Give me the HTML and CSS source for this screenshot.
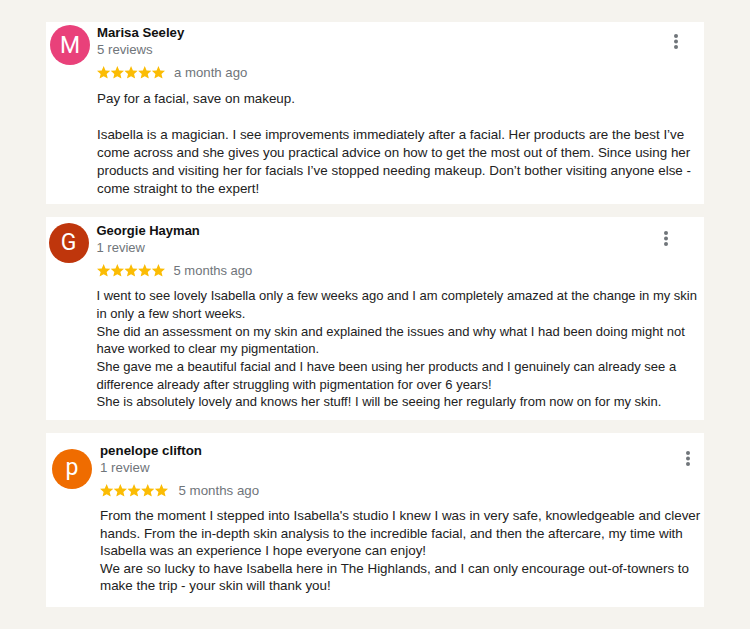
FILE: index.html
```html
<!DOCTYPE html>
<html lang="en">
<head>
<meta charset="utf-8">
<title>Reviews</title>
<link rel="stylesheet" href="styles.css">
</head>
<body>
<svg class="defs" width="0" height="0" aria-hidden="true">
  <defs>
    <symbol id="star" viewBox="2 2 20 19.3">
      <path d="M12 17.27L18.18 21l-1.64-7.03L22 9.24l-7.19-.61L12 2 9.19 8.63 2 9.24l5.46 4.73L5.82 21z"/>
    </symbol>
    <symbol id="dots" viewBox="0 0 4 15">
      <circle cx="2" cy="2" r="2"/>
      <circle cx="2" cy="7.5" r="2"/>
      <circle cx="2" cy="13" r="2"/>
    </symbol>
  </defs>
</svg>

<main class="reviews">
  <article class="card card-1">
    <div class="avatar avatar-pink">M</div>
    <div class="main">
      <div class="head">
        <div class="who">
          <div class="name">Marisa Seeley</div>
          <div class="count">5 reviews</div>
        </div>
        <svg class="more" width="4" height="15"><use href="#dots"/></svg>
      </div>
      <div class="rating">
        <svg class="stars" width="68" height="13" viewBox="0 0 68 13">
          <use href="#star" x="0" width="13.3" height="12.8"/>
          <use href="#star" x="13.7" width="13.3" height="12.8"/>
          <use href="#star" x="27.4" width="13.3" height="12.8"/>
          <use href="#star" x="41.1" width="13.3" height="12.8"/>
          <use href="#star" x="54.8" width="13.3" height="12.8"/>
        </svg>
        <span class="when">a month ago</span>
      </div>
      <p class="text">Pay for a facial, save on makeup.<br><br>Isabella is a magician. I see improvements immediately after a facial. Her products are the best I’ve<br>come across and she gives you practical advice on how to get the most out of them. Since using her<br>products and visiting her for facials I’ve stopped needing makeup. Don’t bother visiting anyone else -<br>come straight to the expert!</p>
    </div>
  </article>

  <article class="card card-2">
    <div class="avatar avatar-rust">G</div>
    <div class="main">
      <div class="head">
        <div class="who">
          <div class="name">Georgie Hayman</div>
          <div class="count">1 review</div>
        </div>
        <svg class="more" width="4" height="15"><use href="#dots"/></svg>
      </div>
      <div class="rating">
        <svg class="stars" width="68" height="13" viewBox="0 0 68 13">
          <use href="#star" x="0" width="13.3" height="12.8"/>
          <use href="#star" x="13.7" width="13.3" height="12.8"/>
          <use href="#star" x="27.4" width="13.3" height="12.8"/>
          <use href="#star" x="41.1" width="13.3" height="12.8"/>
          <use href="#star" x="54.8" width="13.3" height="12.8"/>
        </svg>
        <span class="when">5 months ago</span>
      </div>
      <p class="text">I went to see lovely Isabella only a few weeks ago and I am completely amazed at the change in my skin<br>in only a few short weeks.<br>She did an assessment on my skin and explained the issues and why what I had been doing might not<br>have worked to clear my pigmentation.<br>She gave me a beautiful facial and I have been using her products and I genuinely can already see a<br>difference already after struggling with pigmentation for over 6 years!<br>She is absolutely lovely and knows her stuff! I will be seeing her regularly from now on for my skin.</p>
    </div>
  </article>

  <article class="card card-3">
    <div class="avatar avatar-orange">p</div>
    <div class="main">
      <div class="head">
        <div class="who">
          <div class="name">penelope clifton</div>
          <div class="count">1 review</div>
        </div>
        <svg class="more" width="4" height="15"><use href="#dots"/></svg>
      </div>
      <div class="rating">
        <svg class="stars" width="68" height="13" viewBox="0 0 68 13">
          <use href="#star" x="0" width="13.3" height="12.8"/>
          <use href="#star" x="13.7" width="13.3" height="12.8"/>
          <use href="#star" x="27.4" width="13.3" height="12.8"/>
          <use href="#star" x="41.1" width="13.3" height="12.8"/>
          <use href="#star" x="54.8" width="13.3" height="12.8"/>
        </svg>
        <span class="when">5 months ago</span>
      </div>
      <p class="text">From the moment I stepped into Isabella's studio I knew I was in very safe, knowledgeable and clever<br>hands. From the in-depth skin analysis to the incredible facial, and then the aftercare, my time with<br>Isabella was an experience I hope everyone can enjoy!<br>We are so lucky to have Isabella here in The Highlands, and I can only encourage out-of-towners to<br>make the trip - your skin will thank you!</p>
    </div>
  </article>
</main>
</body>
</html>
```

FILE: styles.css
```css
* {
  box-sizing: border-box;
}

html, body {
  margin: 0;
  padding: 0;
  background: #f5f3ee;
}

body {
  font-family: "Liberation Sans", Arial, sans-serif;
  font-size: 13px;
  color: #222222;
  width: 750px;
  height: 629px;
  overflow: hidden;
}

.defs {
  position: absolute;
  width: 0;
  height: 0;
  overflow: hidden;
}

.reviews {
  display: flex;
  flex-direction: column;
  gap: 13px;
  padding: 22px 0 0 46px;
}

.card {
  width: 658px;
  background: #ffffff;
  display: grid;
  grid-template-columns: 40px 1fr;
  column-gap: var(--gap);
  padding: 0 0 0 var(--pl);
}

.card-1 {
  --pl: 4px;
  --gap: 7px;
  --at: 3px;
  --mt: 2px;
  --dr: 26px;
  --dt: 9.6px;
  --fs: 13.4px;
  --lh: 18px;
  --tm: 9px;
  --nfs: 13.2px;
  --wg: 9px;
  height: 182px;
}

.card-2 {
  --pl: 2.5px;
  --gap: 8px;
  --at: 5.7px;
  --mt: 5.2px;
  --dr: 35.7px;
  --dt: 9.3px;
  --fs: 13px;
  --lh: 17.65px;
  --tm: 8.2px;
  --nfs: 13px;
  --wg: 9px;
  height: 202.5px;
}

.card-3 {
  --pl: 6px;
  --gap: 8px;
  --at: 16px;
  --mt: 9.2px;
  --dr: 14px;
  --dt: 9.3px;
  --fs: 13.4px;
  --lh: 17.5px;
  --tm: 8.5px;
  --nfs: 13.3px;
  --wg: 10.5px;
  height: 174px;
}

.avatar {
  width: 40px;
  height: 40px;
  border-radius: 50%;
  margin-top: var(--at);
  display: flex;
  align-items: center;
  justify-content: center;
  color: #ffffff;
  font-family: Roboto, "Liberation Sans", sans-serif;
  font-size: 23px;
  line-height: 1;
}

.avatar-pink { background: #e9417a; }
.avatar-rust { background: #bf360c; }
.avatar-orange { background: #ef6c00; }

.avatar-orange {
  padding-bottom: 3px;
}

.main {
  padding-top: var(--mt);
  min-width: 0;
}

.head {
  display: flex;
  justify-content: space-between;
  align-items: flex-start;
}

.name {
  font-weight: bold;
  font-size: var(--nfs);
  color: #111111;
  line-height: 17px;
}

.count {
  color: #70757a;
  font-size: var(--nfs);
  line-height: 17px;
}

.more {
  fill: #70757a;
  margin-top: var(--dt);
  margin-right: var(--dr);
  flex: none;
}

.rating {
  display: flex;
  align-items: center;
  height: 17px;
  margin-top: 6px;
}

.stars {
  fill: #fbbc04;
  flex: none;
}

.when {
  color: #70757a;
  font-size: var(--nfs);
  margin-left: var(--wg);
  line-height: 17px;
}

.text {
  margin: var(--tm) 0 0 0;
  font-size: var(--fs);
  line-height: var(--lh);
  white-space: nowrap;
}
```
